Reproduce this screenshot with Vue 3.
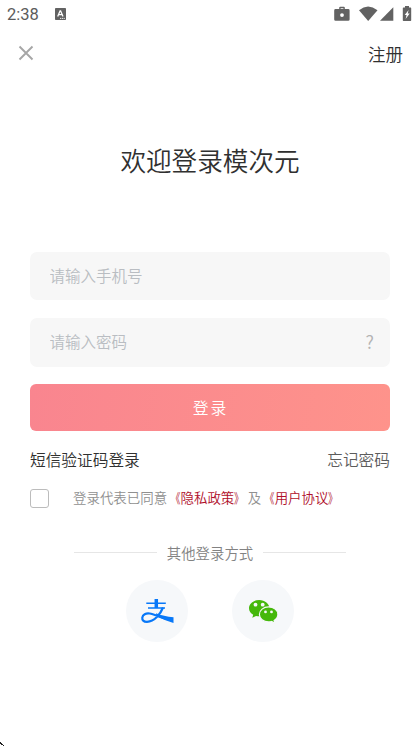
<script setup>
import { ref } from 'vue'

const agreed = ref(false)
const phone = ref('')
const password = ref('')
</script>

<template>
  <main class="screen">
    <div class="status">
      <span class="time">2:38</span>
      <svg class="ime" viewBox="0 0 11 12">
        <rect width="11" height="12" rx=".8" fill="#626262" />
        <path d="M2.7 8.6 5.1 2.8h.5L8 8.6M3.7 6.6h3.3" fill="none" stroke="#fff" stroke-width="1.3" />
        <path d="M5 10.4h5" stroke="#fff" stroke-width=".9" stroke-dasharray="1.2 .6" />
      </svg>
      <svg class="system" viewBox="0 0 78 17">
        <g fill="#626262">
          <path fill-rule="evenodd" d="M5.2 3V1.8Q5.2.8 6.2.8h3.6q1 0 1 1V3h3.4q1.4 0 1.4 1.4v9.2q0 1.200-1.400 1.200H1.600Q.2 14.800.2 13.600V4.400Q.2 3 1.600 3zM6.600 3h2.800V2.200H6.600zM8 7.200a1.900 1.900 0 1 0 0 3.800 1.900 1.900 0 0 0 0-3.800z" />
          <path d="M25 4.200Q34-3 43.500 4.200L34.200 15z" />
          <path d="M46 14.800 59.300 1.300v13.500z" />
          <path fill-rule="evenodd" d="M71 0h4v1.500h1.500q.7 0 .7.7v12q0 .8-.7.800h-7q-.7 0-.7-.8v-12q0-.7.7-.7H71zM74.600 4 70.700 9h1.900l-1 4 4.100-5.600h-2z" />
        </g>
      </svg>
    </div>

    <header class="nav">
      <svg class="close" viewBox="0 0 16 16">
        <path d="M1.500 1.500l13 13M14.500 1.500l-13 13" stroke="#a6a6a6" stroke-width="1.900" />
      </svg>
      <span>注册</span>
    </header>

    <h1>欢迎登录模次元</h1>

    <form class="form" @submit.prevent>
      <label class="field"><input v-model="phone" placeholder="请输入手机号" /></label>
      <label class="field second">
        <input v-model="password" type="password" placeholder="请输入密码" />
        <span class="help">?</span>
      </label>
      <button class="submit">登录</button>
    </form>

    <div class="links"><span>短信验证码登录</span><span class="forgot">忘记密码</span></div>

    <div class="agreement">
      <input v-model="agreed" class="check" type="checkbox" />
      <span>登录代表已同意<b><i class="open">《</i>隐私政策<i class="shut">》</i></b>及<b><i class="open">《</i>用户协议<i class="shut">》</i></b></span>
    </div>

    <div class="divider"><span>其他登录方式</span></div>

    <div class="socials">
      <span class="social">
        <svg viewBox="0 0 62 62">
          <g fill="none" stroke="#0878f8">
            <path d="M20.300 23.200h19.500M22 28h17" stroke-width="1.600" />
            <path d="M30.300 19v9" stroke-width="3.500" />
            <path d="M37 27.500c-2.500 6.500-8.500 14.300-16 14.300-3.500 0-5-1.800-4.700-4.200.4-3 3.600-4.700 7.400-4.100 5.300.8 12 5 23 6.900" stroke-width="2.200" />
          </g>
          <path d="M30 33.200c5 2 11 3.400 17.500 4V43c-6-1.600-11.500-4.300-17-7z" fill="#0878f8" />
        </svg>
      </span>
      <span class="social">
        <svg viewBox="0 0 62 62">
          <path d="M27.200 20c-5.700 0-10.200 3.600-10.200 8.200 0 2.800 1.600 5.100 4.200 6.600l-.9 3 3.700-1.900c1 .3 2.100.4 3.200.4 5.700 0 10.200-3.600 10.200-8.100S32.900 20 27.200 20z" fill="#45b80b" />
          <path d="M36.600 26.900c-5.200 0-9.200 3.400-9.200 7.500s4 7.500 9.200 7.500c1.100 0 2.100-.1 3-.4l3.300 1.800-.8-2.900c2.300-1.400 3.800-3.500 3.800-6 0-4.100-4.100-7.500-9.300-7.500z" fill="#45b80b" stroke="#f6f8fa" stroke-width="1.200" />
          <g fill="#f6f8fa"><circle cx="23.500" cy="24.700" r="1.900" /><circle cx="30.700" cy="24.700" r="1.900" /><circle cx="33.500" cy="31.900" r="1.400" /><circle cx="39.500" cy="31.900" r="1.400" /></g>
        </svg>
      </span>
    </div>

    <svg class="corner" viewBox="0 0 4 4">
      <path d="M0 0h1v1h1v1h1v1h1v1H3V3H1V2H0z" fill="#222" />
    </svg>
  </main>
</template>

<style>
body {
  margin: 0;
  background: #fff;
}
</style>

<style scoped>
.screen {
  box-sizing: border-box;
  width: 419px;
  height: 746px;
  display: flex;
  flex-direction: column;
  overflow: hidden;
  background: #fff;
  color: #303030;
  font-family: "Noto Sans CJK SC", sans-serif;
  font-weight: 350;
}
.screen svg {
  display: block;
}
.status {
  display: flex;
  align-items: center;
  height: 28px;
  padding: 0 7px 0 7px;
}
.time {
  width: 48px;
  padding-top: 1px;
  font: 16.5px/28px Roboto, sans-serif;
  color: #5c5c5c;
}
.ime {
  width: 11px;
  height: 12px;
}
.system {
  width: 78px;
  height: 17px;
  margin-left: auto;
}
.nav {
  display: flex;
  align-items: center;
  justify-content: space-between;
  height: 50px;
  padding: 0 16px 0 18px;
  font-size: 17.5px;
}
.close {
  width: 16px;
  height: 16px;
}
h1 {
  margin: 62px 0 0;
  padding-left: 1px;
  font-size: 25.6px;
  font-weight: 350;
  line-height: 40px;
  text-align: center;
}
.form {
  display: flex;
  flex-direction: column;
  margin: 72px 29px 0 30px;
}
.field {
  box-sizing: border-box;
  display: flex;
  align-items: center;
  height: 48px;
  padding: 0 16px 2px 19.5px;
  border-radius: 7px;
  background: #f7f7f7;
}
.second {
  height: 49px;
  margin-top: 18px;
  padding-bottom: 3px;
}
.field input {
  flex: 1;
  min-width: 0;
  padding: 0;
  border: 0;
  outline: 0;
  background: none;
  color: #333;
  font: 350 15.5px/24px "Noto Sans CJK SC", sans-serif;
}
.field input::placeholder {
  color: #b9bdc2;
  opacity: 1;
}
.help {
  font: 350 18px/24px "Noto Sans CJK SC", sans-serif;
  color: #b3b3b3;
}
.submit {
  height: 47px;
  margin-top: 16.5px;
  padding: 2px 0 0 1px;
  border: 0;
  border-radius: 6px;
  background: linear-gradient(100deg, #f9858f, #fe938b);
  color: #fff;
  font: 350 15.8px/24px "Noto Sans CJK SC", sans-serif;
  letter-spacing: 2px;
}
.links {
  display: flex;
  justify-content: space-between;
  margin: 17.500px 29px 0 30px;
  font-size: 15.700px;
  line-height: 24px;
}
.forgot {
  color: #5c5c5c;
}
.agreement {
  display: flex;
  align-items: center;
  height: 20px;
  margin: 16.500px 0 0 30px;
  font-size: 13.450px;
  white-space: nowrap;
  color: #909090;
}
.agreement > span {
  margin-top: -4px;
}
.agreement b {
  font-weight: 350;
  color: #b0102c;
}
.agreement i {
  display: inline-block;
  font-style: normal;
}
.open {
  transform: scaleX(.72);
  transform-origin: right;
}
.shut {
  transform: scaleX(.72);
  transform-origin: left;
}
.check {
  appearance: none;
  box-sizing: border-box;
  width: 19px;
  height: 19px;
  margin: 0 24px 0 0;
  border: 1px solid #bcbcbc;
  border-radius: 3px;
}
.divider {
  display: flex;
  align-items: center;
  gap: 10px;
  height: 20px;
  margin: 34px 73px 0 74px;
  font-size: 14.400px;
  color: #828282;
}
.divider span {
  margin-top: -1px;
}
.divider::before,
.divider::after {
  content: "";
  flex: 1;
  height: 1px;
  background: #e6e6e6;
}
.socials {
  display: flex;
  justify-content: center;
  gap: 44px;
  margin-top: 17px;
}
.social {
  width: 62px;
  height: 62px;
  border-radius: 50%;
  background: #f6f8fa;
}
.corner {
  width: 4px;
  height: 4px;
  margin-top: auto;
}
</style>
